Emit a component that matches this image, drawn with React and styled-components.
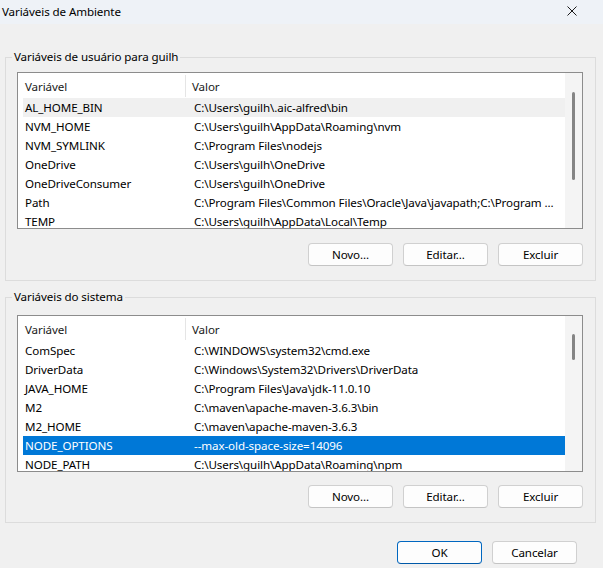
import React from "react";
import styled, { createGlobalStyle } from "styled-components";

const GlobalStyle = createGlobalStyle`
  html, body { margin: 0; padding: 0; background: #f0f0f0; }
  body {
    font-family: "Noto Sans", "Open Sans", sans-serif;
    font-size: 11.6px;
    letter-spacing: -0.1px;
    color: #000;
    width: 603px;
    height: 568px;
    overflow: hidden;
  }
  * { box-sizing: border-box; }
`;

const Window = styled.div`
  width: 603px;
  height: 568px;
  background: #f0f0f0;
  display: flex;
  flex-direction: column;
`;

const TitleBar = styled.div`
  height: 24px;
  background: #eef2f7;
  display: flex;
  align-items: center;
  justify-content: space-between;
  padding: 0 26px 0 2px;
`;

const Title = styled.span`
  line-height: 16px;
  margin-top: -1px;
`;

const CloseIcon = styled.svg`
  width: 10px;
  height: 10px;
  display: block;
  margin-top: -2px;
`;

const Body = styled.div`
  display: flex;
  flex-direction: column;
  padding: 0 7px 0 5px;
`;

const Group = styled.div`
  position: relative;
  margin-top: ${(p) => p.$mt}px;
  border: 1px solid #dcdcdc;
  padding: ${(p) => p.$pt}px 12px 14px 11px;
  display: flex;
  flex-direction: column;
`;

const Legend = styled.span`
  position: absolute;
  top: -9px;
  left: 6px;
  padding: 0 2px;
  background: #f0f0f0;
  line-height: 16px;
  white-space: nowrap;
`;

const List = styled.div`
  height: 157px;
  border: 1px solid #8c8c8c;
  background: #fff;
  display: flex;
  overflow: hidden;
`;

const ListContent = styled.div`
  flex: 1;
  padding-left: 5px;
  overflow: hidden;
`;

const HeaderRow = styled.div`
  height: 25px;
  display: flex;
  align-items: stretch;
  color: #1a1a1a;
`;

const HeaderCell = styled.div`
  display: flex;
  align-items: center;
  width: ${(p) => (p.$w ? `${p.$w}px` : "auto")};
  flex: ${(p) => (p.$w ? "none" : "1")};
  padding-left: ${(p) => p.$pl}px;
  border-right: ${(p) => (p.$sep ? "1px solid #e5e5e5" : "none")};
  margin: 2px 0 1px;
`;

const Row = styled.div`
  height: 19px;
  display: flex;
  align-items: center;
  white-space: nowrap;
  background: ${(p) => (p.$selected ? "#0078d7" : p.$hover ? "#f0f0f0" : "transparent")};
  color: ${(p) => (p.$selected ? "#fff" : "#000")};
`;

const Cell = styled.div`
  width: ${(p) => (p.$w ? `${p.$w}px` : "auto")};
  flex: ${(p) => (p.$w ? "none" : "1")};
  padding-left: ${(p) => p.$pl}px;
  overflow: hidden;
  line-height: 19px;
`;

const Scrollbar = styled.div`
  width: 17px;
  flex: none;
  background: #f4f4f4;
  display: flex;
  justify-content: center;
`;

const Thumb = styled.div`
  width: 3px;
  border-radius: 2px;
  background: #858585;
  margin-top: ${(p) => p.$top}px;
  height: ${(p) => p.$h}px;
`;

const ButtonRow = styled.div`
  display: flex;
  justify-content: flex-end;
  gap: 10px;
  margin-top: ${(p) => p.$mt}px;
  padding-right: ${(p) => p.$pr || 0}px;
`;

const Button = styled.button`
  width: 85px;
  height: 23px;
  font-family: inherit;
  font-size: 11.6px;
  letter-spacing: -0.1px;
  color: #000;
  background: #fdfdfd;
  border: 1px solid ${(p) => (p.$primary ? "#0067c0" : "#d0d0d0")};
  border-bottom-color: ${(p) => (p.$primary ? "#0059a8" : "#c4c4c4")};
  border-radius: 4px;
  padding: 0;
  line-height: 21px;
`;

const userVars = [
  ["AL_HOME_BIN", "C:\\Users\\guilh\\.aic-alfred\\bin"],
  ["NVM_HOME", "C:\\Users\\guilh\\AppData\\Roaming\\nvm"],
  ["NVM_SYMLINK", "C:\\Program Files\\nodejs"],
  ["OneDrive", "C:\\Users\\guilh\\OneDrive"],
  ["OneDriveConsumer", "C:\\Users\\guilh\\OneDrive"],
  ["Path", "C:\\Program Files\\Common Files\\Oracle\\Java\\javapath;C:\\Program ..."],
  ["TEMP", "C:\\Users\\guilh\\AppData\\Local\\Temp"],
];

const sysVars = [
  ["ComSpec", "C:\\WINDOWS\\system32\\cmd.exe"],
  ["DriverData", "C:\\Windows\\System32\\Drivers\\DriverData"],
  ["JAVA_HOME", "C:\\Program Files\\Java\\jdk-11.0.10"],
  ["M2", "C:\\maven\\apache-maven-3.6.3\\bin"],
  ["M2_HOME", "C:\\maven\\apache-maven-3.6.3"],
  ["NODE_OPTIONS", "--max-old-space-size=14096"],
  ["NODE_PATH", "C:\\Users\\guilh\\AppData\\Roaming\\npm"],
];

function VarList({ rows, hover, selected, thumbTop, thumbH }) {
  return (
    <List>
      <ListContent>
        <HeaderRow>
          <HeaderCell $w={163} $pl={2} $sep>
            Variável
          </HeaderCell>
          <HeaderCell $pl={6}>Valor</HeaderCell>
        </HeaderRow>
        {rows.map(([k, v], i) => (
          <Row key={k} $hover={i === hover} $selected={i === selected}>
            <Cell $w={163} $pl={2}>
              {k}
            </Cell>
            <Cell $pl={8}>{v}</Cell>
          </Row>
        ))}
      </ListContent>
      <Scrollbar>
        <Thumb $top={thumbTop} $h={thumbH} />
      </Scrollbar>
    </List>
  );
}

function Actions({ mt }) {
  return (
    <ButtonRow $mt={mt}>
      <Button>Novo...</Button>
      <Button>Editar...</Button>
      <Button>Excluir</Button>
    </ButtonRow>
  );
}

export default function App() {
  return (
    <>
      <GlobalStyle />
      <Window>
        <TitleBar>
          <Title>Variáveis de Ambiente</Title>
          <CloseIcon viewBox="0 0 10 10">
            <path d="M0.5 0.5 L9.5 9.5 M9.5 0.5 L0.5 9.5" stroke="#1a1a1a" strokeWidth="1" fill="none" />
          </CloseIcon>
        </TitleBar>
        <Body>
          <Group $mt={33} $pt={14}>
            <Legend>Variáveis de usuário para guilh</Legend>
            <VarList rows={userVars} hover={0} thumbTop={19} thumbH={88} />
            <Actions mt={14} />
          </Group>
          <Group $mt={16} $pt={17}>
            <Legend>Variáveis do sistema</Legend>
            <VarList rows={sysVars} selected={5} thumbTop={18} thumbH={26} />
            <Actions mt={13} />
          </Group>
          <ButtonRow $mt={18} $pr={19}>
            <Button $primary>OK</Button>
            <Button>Cancelar</Button>
          </ButtonRow>
        </Body>
      </Window>
    </>
  );
}
